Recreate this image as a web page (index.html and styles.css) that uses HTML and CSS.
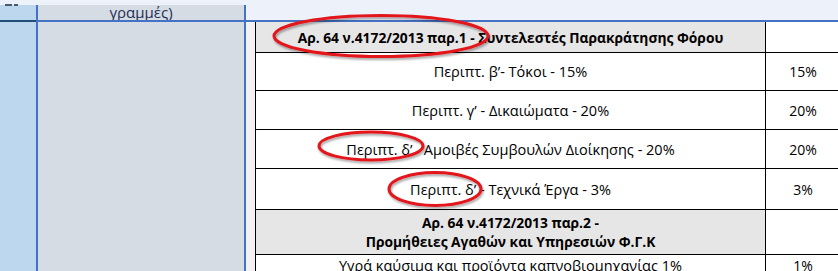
FILE: index.html
```html
<!DOCTYPE html>
<html lang="el">
<head>
<meta charset="utf-8">
<title>Συντελεστές Παρακράτησης Φόρου</title>
<link rel="stylesheet" href="styles.css">
</head>
<body>
<div class="sheet">
  <div class="top-strip"></div>
  <div class="top-row">
    <div class="c-left"><span class="mark"></span><span class="mark short"></span></div>
    <div class="vline"></div>
    <div class="c-mid top-text"><span class="top-label">γραμμές)</span></div>
    <div class="vline"></div>
    <div class="c-rest"></div>
  </div>
  <div class="hline"><div class="hl-left"></div><div class="hl-rest"></div></div>
  <div class="main">
    <div class="c-left"></div>
    <div class="vline"></div>
    <div class="c-mid"></div>
    <div class="vline"></div>
    <div class="gap"></div>
    <div class="table">
      <div class="cell head r1">Αρ. 64 ν.4172/2013 παρ.1 - Συντελεστές Παρακράτησης Φόρου</div>
      <div class="cell val r1"></div>
      <div class="cell r2">Περιπτ. β’- Τόκοι - 15%</div>
      <div class="cell val r2">15%</div>
      <div class="cell r3">Περιπτ. γ’ - Δικαιώματα - 20%</div>
      <div class="cell val r3">20%</div>
      <div class="cell r4">Περιπτ. δ’&nbsp;&nbsp; Αμοιβές Συμβουλών Διοίκησης - 20%</div>
      <div class="cell val r4">20%</div>
      <div class="cell r5">Περιπτ. δ’ - Τεχνικά Έργα - 3%</div>
      <div class="cell val r5">3%</div>
      <div class="cell head r6">Αρ. 64 ν.4172/2013 παρ.2 -<br>Προμήθειες Αγαθών και Υπηρεσιών Φ.Γ.Κ</div>
      <div class="cell val r6"></div>
      <div class="cell r7">Υγρά καύσιμα και προϊόντα καπνοβιομηχανίας 1%</div>
      <div class="cell val r7">1%</div>
    </div>
  </div>
</div>
<svg class="marks" viewBox="0 0 838 271" width="838" height="271" aria-hidden="true">
  <defs>
    <filter id="sh" x="-20%" y="-40%" width="140%" height="180%">
      <feDropShadow dx="1" dy="2" stdDeviation="1.2" flood-color="#000" flood-opacity="0.35"/>
    </filter>
  </defs>
  <g fill="none" stroke="#e3141b" stroke-width="3" filter="url(#sh)">
    <ellipse cx="381" cy="36" rx="107" ry="20.5"/>
    <ellipse cx="371" cy="146" rx="52" ry="14"/>
    <ellipse cx="435" cy="189" rx="46" ry="16.5"/>
  </g>
</svg>
</body>
</html>
```

FILE: styles.css
```css
html, body {
  margin: 0;
  padding: 0;
}
body {
  width: 838px;
  height: 271px;
  overflow: hidden;
  position: relative;
  background: #f2f2f2;
  font-family: "Open Sans", "Noto Sans", sans-serif;
  color: #000;
}
.sheet {
  display: flex;
  flex-direction: column;
  height: 271px;
}
.top-strip {
  height: 5px;
  background: #edf1f9;
}
.top-row {
  display: flex;
  height: 15px;
}
.c-left {
  width: 36px;
  background: #bdd7ee;
  flex: none;
}
.top-row .c-left {
  display: flex;
  gap: 2px;
  padding-left: 5px;
  align-items: flex-start;
  box-sizing: border-box;
}
.mark {
  width: 7px;
  height: 2px;
  background: #4d5a6e;
  margin-top: -1px;
}
.mark.short {
  width: 4px;
}
.vline {
  width: 2px;
  background: #4472c4;
  flex: none;
}
.c-mid {
  width: 206px;
  background: #d6dce4;
  flex: none;
}
.top-text {
  text-align: center;
  overflow: hidden;
}
.top-label {
  display: block;
  font-size: 15px;
  line-height: 15px;
  margin-top: 0;
  color: #1f2f55;
}
.c-rest {
  flex: 1;
  background: #edf1f9;
}
.hline {
  display: flex;
  height: 2px;
}
.hl-left {
  width: 36px;
  background: #1f4e79;
}
.hl-rest {
  flex: 1;
  background: #4472c4;
}
.main {
  display: flex;
  flex: 1;
  min-height: 0;
}
.gap {
  width: 9px;
  background: #f2f2f2;
  flex: none;
}
.table {
  flex: none;
  display: grid;
  grid-template-columns: 510px 74px;
  grid-template-rows: 31px 38px 39px 39px 41px 45px 40px;
  border-left: 1px solid #000;
  background: #fff;
  align-self: flex-start;
}
.cell {
  display: flex;
  align-items: center;
  justify-content: center;
  text-align: center;
  font-size: 14.5px;
  line-height: 19px;
  border-bottom: 1px solid #000;
  border-right: 1px solid #000;
  background: #fff;
  white-space: nowrap;
}
.cell.val {
  border-right: none;
  font-size: 14px;
}
.cell.head {
  background: #e7e6e6;
  font-weight: 700;
  font-size: 13.8px;
}
.cell.r7 {
  align-items: flex-start;
  padding-top: 1px;
}
.marks {
  position: absolute;
  left: 0;
  top: 0;
  pointer-events: none;
}
```
